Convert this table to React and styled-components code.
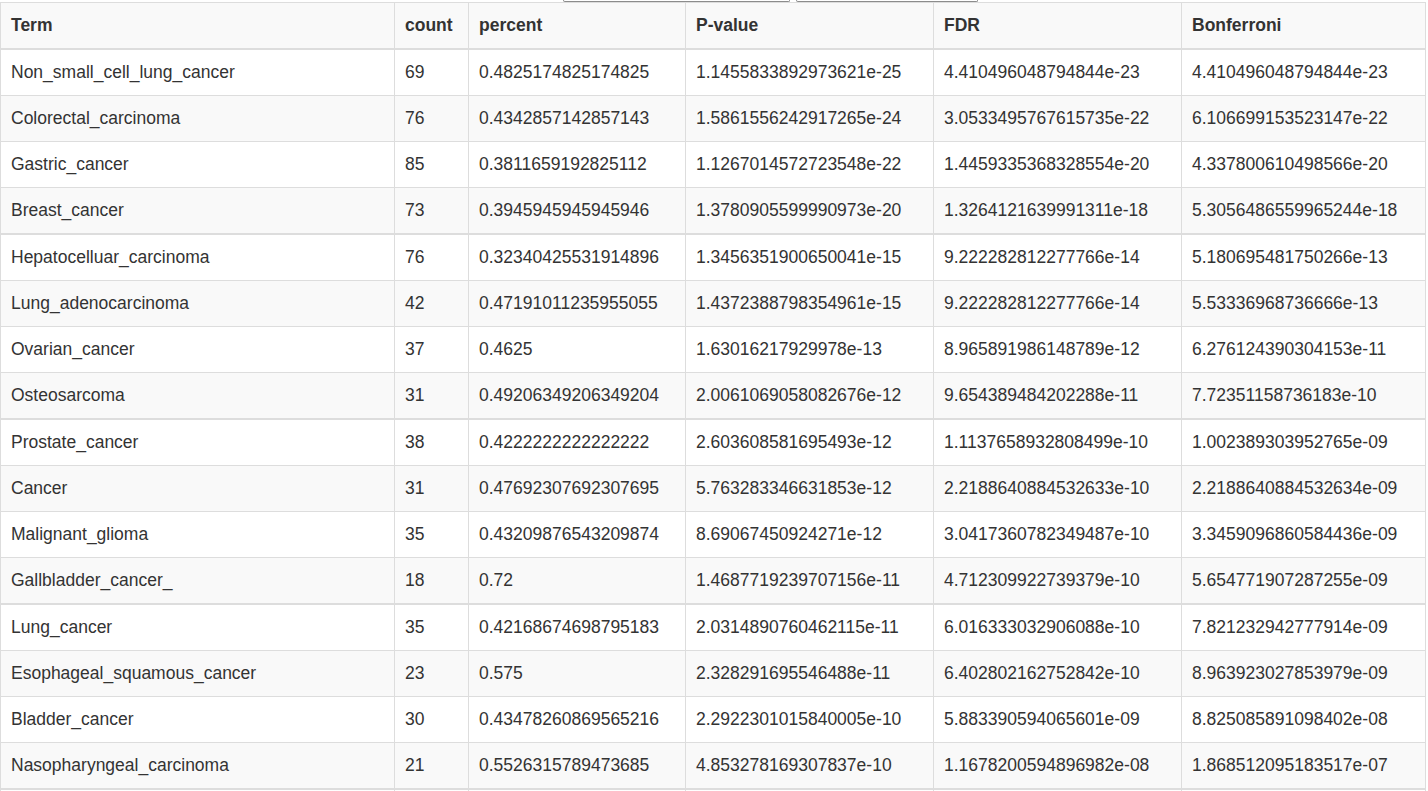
import React from "react";
import styled, { createGlobalStyle } from "styled-components";

const GlobalStyle = createGlobalStyle`
  html, body {
    margin: 0;
    padding: 0;
    background: #fff;
  }
  body {
    font-family: "Liberation Sans", Arial, Helvetica, sans-serif;
    font-size: 17.5px;
    color: #333;
  }
`;

const Page = styled.div`
  width: 1428px;
  height: 791px;
  overflow: hidden;
`;

const Toolbar = styled.div`
  display: flex;
  gap: 6px;
  padding-left: 563px;
  height: 2px;
`;

const ToolBox = styled.div`
  box-sizing: border-box;
  width: ${(p) => p.$w}px;
  height: 2px;
  border: 1px solid #8c8c8c;
  border-top: none;
  border-radius: 0 0 3px 3px;
`;

const Table = styled.table`
  width: 1425px;
  table-layout: fixed;
  border-collapse: collapse;
  border-spacing: 0;
  border: 1px solid #ddd;
`;

const Th = styled.th`
  text-align: left;
  font-weight: bold;
  line-height: 25px;
  padding: 10px;
  background: #f9f9f9;
  border: 1px solid #ddd;
  border-bottom: 2px solid #ddd;
  vertical-align: bottom;
  white-space: nowrap;
`;

const Group = styled.tbody`
  & + & {
    border-top: 2px solid #ddd;
  }
`;

const Row = styled.tr`
  background: ${(p) => (p.$striped ? "#f9f9f9" : "#fff")};
`;

const Td = styled.td`
  line-height: 25px;
  padding: 10px;
  border: 1px solid #ddd;
  vertical-align: top;
  white-space: nowrap;
  overflow: hidden;
`;

const columns = [
  { key: "term", label: "Term", width: 394 },
  { key: "count", label: "count", width: 74 },
  { key: "percent", label: "percent", width: 217 },
  { key: "p", label: "P-value", width: 248 },
  { key: "fdr", label: "FDR", width: 248 },
  { key: "bonf", label: "Bonferroni", width: 244 },
];

const rows = [
  ["Non_small_cell_lung_cancer", "69", "0.4825174825174825", "1.1455833892973621e-25", "4.410496048794844e-23", "4.410496048794844e-23"],
  ["Colorectal_carcinoma", "76", "0.4342857142857143", "1.5861556242917265e-24", "3.0533495767615735e-22", "6.106699153523147e-22"],
  ["Gastric_cancer", "85", "0.3811659192825112", "1.1267014572723548e-22", "1.4459335368328554e-20", "4.337800610498566e-20"],
  ["Breast_cancer", "73", "0.3945945945945946", "1.3780905599990973e-20", "1.3264121639991311e-18", "5.3056486559965244e-18"],
  ["Hepatocelluar_carcinoma", "76", "0.32340425531914896", "1.3456351900650041e-15", "9.222282812277766e-14", "5.180695481750266e-13"],
  ["Lung_adenocarcinoma", "42", "0.47191011235955055", "1.4372388798354961e-15", "9.222282812277766e-14", "5.53336968736666e-13"],
  ["Ovarian_cancer", "37", "0.4625", "1.63016217929978e-13", "8.965891986148789e-12", "6.276124390304153e-11"],
  ["Osteosarcoma", "31", "0.49206349206349204", "2.0061069058082676e-12", "9.654389484202288e-11", "7.72351158736183e-10"],
  ["Prostate_cancer", "38", "0.4222222222222222", "2.603608581695493e-12", "1.1137658932808499e-10", "1.002389303952765e-09"],
  ["Cancer", "31", "0.47692307692307695", "5.763283346631853e-12", "2.2188640884532633e-10", "2.2188640884532634e-09"],
  ["Malignant_glioma", "35", "0.43209876543209874", "8.69067450924271e-12", "3.0417360782349487e-10", "3.3459096860584436e-09"],
  ["Gallbladder_cancer_", "18", "0.72", "1.4687719239707156e-11", "4.712309922739379e-10", "5.654771907287255e-09"],
  ["Lung_cancer", "35", "0.42168674698795183", "2.0314890760462115e-11", "6.016333032906088e-10", "7.821232942777914e-09"],
  ["Esophageal_squamous_cancer", "23", "0.575", "2.328291695546488e-11", "6.402802162752842e-10", "8.963923027853979e-09"],
  ["Bladder_cancer", "30", "0.43478260869565216", "2.2922301015840005e-10", "5.883390594065601e-09", "8.825085891098402e-08"],
  ["Nasopharyngeal_carcinoma", "21", "0.5526315789473685", "4.853278169307837e-10", "1.1678200594896982e-08", "1.868512095183517e-07"],
  ["", "", "", "", "", ""],
];

// rows come in groups of four, each its own tbody
const groups = [];
for (let i = 0; i < rows.length; i += 4) groups.push(rows.slice(i, i + 4));

const App = () => {
  return (
    <Page>
      <GlobalStyle />
      <Toolbar>
        <ToolBox $w={227} />
        <ToolBox $w={182} />
      </Toolbar>
      <Table>
        <colgroup>
          {columns.map((c) => (
            <col key={c.key} style={{ width: c.width }} />
          ))}
        </colgroup>
        <thead>
          <tr>
            {columns.map((c) => (
              <Th key={c.key}>{c.label}</Th>
            ))}
          </tr>
        </thead>
        {groups.map((g, gi) => (
          <Group key={gi}>
            {g.map((r, ri) => (
              <Row key={ri} $striped={ri % 2 === 1}>
                {r.map((v, ci) => (
                  <Td key={ci}>{v || "\u00a0"}</Td>
                ))}
              </Row>
            ))}
          </Group>
        ))}
      </Table>
    </Page>
  );
};

export default App;
